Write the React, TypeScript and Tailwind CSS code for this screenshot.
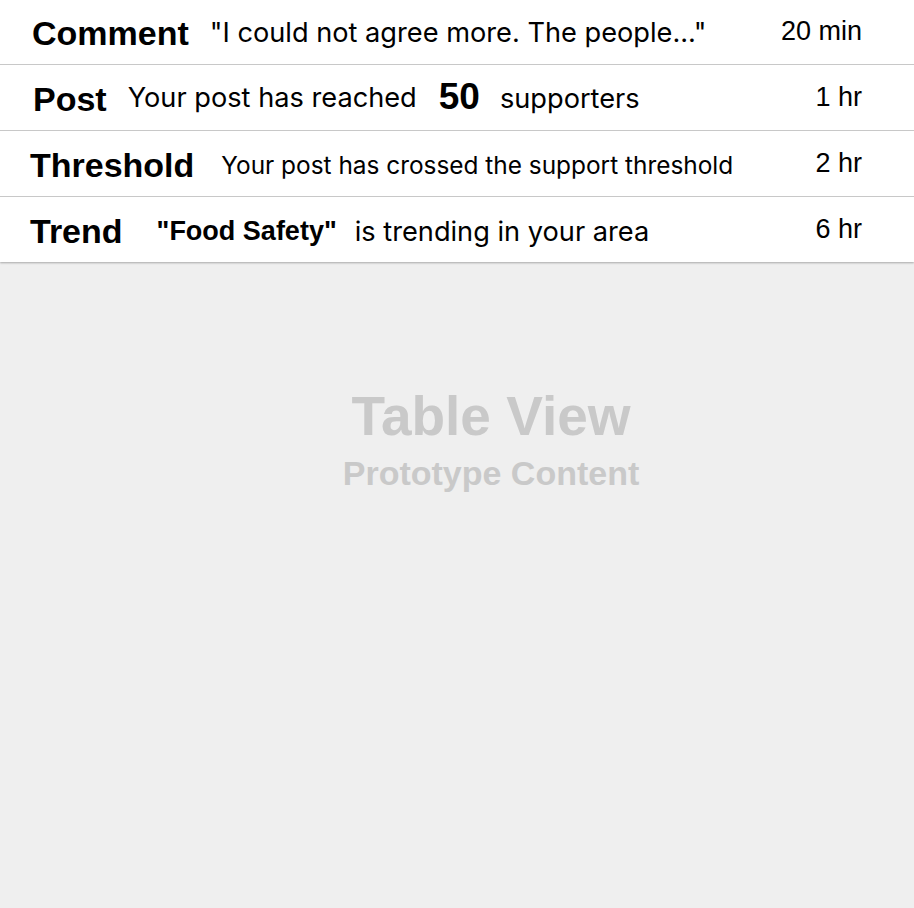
import React from 'react';

const title = "font-['Liberation_Sans',Arial,sans-serif] font-bold text-[34px] text-black leading-none";
const body = "font-['Inter',sans-serif] text-black leading-none";
const time = "ml-auto pr-[52px] font-['Liberation_Sans',Arial,sans-serif] text-[27px] text-black leading-none";

const App = () => {
  return (
    <div className="w-[914px] h-[908px] bg-[#efefef] flex flex-col">
      <div className="bg-white shadow-[0_1px_2px_rgba(0,0,0,0.3)]">
        <div className="h-[65px] flex items-center border-b border-[#c8c8c8]">
          <span className={`${title} pl-[32px] pt-[2px]`}>Comment</span>
          <span className={`${body} text-[27.2px] ml-[21px] pt-[2px]`}>"I could not agree more. The people..."</span>
          <span className={`${time} pb-[1px]`}>20 min</span>
        </div>
        <div className="h-[66px] flex items-center border-b border-[#c8c8c8]">
          <span className={`${title} text-[33px] pl-[33px] pt-[2px]`}>Post</span>
          <span className={`${body} text-[27.2px] ml-[21px]`}>Your post has reached</span>
          <span className="font-['Liberation_Sans',Arial,sans-serif] font-bold text-[37px] leading-none ml-[22px] pb-[2px]">50</span>
          <span className={`${body} text-[27.2px] ml-[20px] pt-[2px]`}>supporters</span>
          <span className={time}>1 hr</span>
        </div>
        <div className="h-[66px] flex items-center border-b border-[#c8c8c8]">
          <span className={`${title} pl-[30px] pt-[2px]`}>Threshold</span>
          <span className={`${body} text-[24.4px] ml-[27px] pt-[4px]`}>Your post has crossed the support threshold</span>
          <span className={time}>2 hr</span>
        </div>
        <div className="h-[65px] flex items-center">
          <span className={`${title} pl-[30px] pt-[2px]`}>Trend</span>
          <span className="font-['Liberation_Sans',Arial,sans-serif] font-bold text-[27px] leading-none ml-[34px] pt-[3px]">"Food Safety"</span>
          <span className={`${body} text-[27.2px] ml-[18px] pt-[4px]`}>is trending in your area</span>
          <span className={time}>6 hr</span>
        </div>
      </div>
      <div className="flex flex-col items-center pl-[68px] pt-[127px] font-['Liberation_Sans',Arial,sans-serif] font-bold text-[#c9c9c9]">
        <span className="text-[55px] leading-none">Table View</span>
        <span className="text-[34px] leading-none mt-[12px]">Prototype Content</span>
      </div>
    </div>
  );
};

export default App;
